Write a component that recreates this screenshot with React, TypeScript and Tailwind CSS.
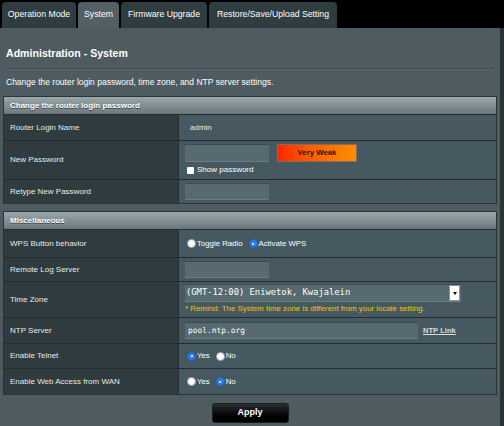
import React from 'react';

const sans = 'font-["Liberation_Sans",Arial,sans-serif]';
const mono = 'font-["DejaVu_Sans_Mono",monospace]';

function Radio({ checked }: { checked?: boolean }) {
  if (checked) {
    return (
      <span className="inline-flex items-center justify-center w-[9px] h-[9px] rounded-full bg-[#2d80ee] border border-[#1f63c4]">
        <span className="w-[2px] h-[2px] rounded-full bg-white" />
      </span>
    );
  }
  return <span className="inline-block w-[9px] h-[9px] rounded-full bg-white border border-[#9aa3a6]" />;
}

function Field({ className }: { className: string }) {
  return <div className={`bg-[#566a70] border-t border-t-[#3d4b50] border-b border-b-[#6b7d82] ${className}`} />;
}

function Row({ label, h, children }: { label: string; h: string; children?: React.ReactNode }) {
  return (
    <div className={`flex ${h} border-t border-[#232c2f]`}>
      <div className="w-[175px] shrink-0 bg-[#2f3b3f] border-r border-[#232c2f] flex items-center pl-[6px] text-[8px] text-[#e6eaeb]">
        {label}
      </div>
      <div className="flex-1 bg-[#475960] flex flex-col justify-center pl-[6px]">{children}</div>
    </div>
  );
}

function Head({ title }: { title: string }) {
  return (
    <div className="h-[17px] bg-gradient-to-b from-[#9aa7ab] to-[#6a777c] flex items-center pl-[6px] text-[8px] font-bold text-white [text-shadow:0_1px_0_#3a4448]">
      {title}
    </div>
  );
}

const tabs = [
  { name: 'Operation Mode', w: 'w-[74px]' },
  { name: 'System', w: 'w-[41px]', active: true },
  { name: 'Firmware Upgrade', w: 'w-[86px]' },
  { name: 'Restore/Save/Upload Setting', w: 'w-[128px]' },
];

export default function App() {
  return (
    <div className={`w-[504px] h-[426px] bg-black overflow-hidden ${sans}`}>
      <div className="flex items-end gap-[2px] pl-[2px] h-[28px]">
        {tabs.map((t) => (
          <div
            key={t.name}
            className={`${t.w} ${t.active ? 'h-[26px] bg-[#525f64]' : 'h-[26px] bg-[#2f3c40]'} rounded-t-[4px] flex items-center justify-center text-[8.7px] text-white`}
          >
            {t.name}
          </div>
        ))}
      </div>

      <div className="flex">
        <div className="w-[500px] h-[398px] bg-[#4e5b60] px-[3px]">
          <div className="pt-[17px] pl-[3px] h-[40px] text-[10.6px] font-bold text-white leading-[16px]">
            Administration - System
          </div>
          <div className="mx-[3px] border-t border-t-[#3e4a4e] border-b border-b-[#5a676c]" />
          <div className="pl-[3px] mt-[5px] h-[15px] leading-[15px] text-[8.5px] text-white">
            Change the router login password, time zone, and NTP server settings.
          </div>

          <div className="mt-[6px] border border-[#2a3336]">
            <Head title="Change the router login password" />
            <Row label="Router Login Name" h="h-[26px]">
              <span className="pl-[5px] text-[8px] text-[#e6eaeb]">admin</span>
            </Row>
            <Row label="New Password" h="h-[39px]">
              <div className="flex items-center gap-[8px]">
                <Field className="w-[84px] h-[18px]" />
                <div className="w-[80px] h-[18px] bg-gradient-to-r from-[#ff2300] to-[#ff8d00] border border-[#8a6a58] flex items-center justify-center text-[7.8px] font-bold text-[#2a1a10]">
                  Very Weak
                </div>
              </div>
              <div className="flex items-center gap-[3px] mt-[2px] pl-[2px] text-[8px] text-white">
                <span className="inline-block w-[7px] h-[7px] bg-white rounded-[1px]" />
                Show password
              </div>
            </Row>
            <Row label="Retype New Password" h="h-[24px]">
              <Field className="w-[84px] h-[17px]" />
            </Row>
          </div>

          <div className="mt-[7px] border border-[#2a3336]">
            <Head title="Miscellaneous" />
            <Row label="WPS Button behavior" h="h-[28px]">
              <div className="flex items-center gap-[1px] pl-[2px] text-[7.8px] text-white">
                <Radio />
                <span className="mr-[5px]">Toggle Radio</span>
                <Radio checked />
                <span>Activate WPS</span>
              </div>
            </Row>
            <Row label="Remote Log Server" h="h-[24px]">
              <Field className="w-[84px] h-[17px]" />
            </Row>
            <Row label="Time Zone" h="h-[36px]">
              <div className="w-[276px] h-[18px] bg-[#566a70] border-t border-t-[#3d4b50] border-b border-b-[#6b7d82] flex items-center justify-between">
                <span className={`pl-[1px] text-[8.8px] text-white ${mono}`}>(GMT-12:00) Eniwetok, Kwajalein</span>
                <span className="w-[11px] h-[16px] bg-white border border-[#8a9497] mr-[1px] flex items-center justify-center">
                  <span className="w-0 h-0 border-l-[2px] border-r-[2px] border-t-[3px] border-l-transparent border-r-transparent border-t-black" />
                </span>
              </div>
              <div className="mt-[1px] text-[7.9px] text-[#f1c400]">
                * Remind: The System time zone is different from your locale setting.
              </div>
            </Row>
            <Row label="NTP Server" h="h-[26px]">
              <div className="flex items-center gap-[5px]">
                <div className="w-[233px] h-[17px] bg-[#566a70] border-t border-t-[#3d4b50] border-b border-b-[#6b7d82] flex items-center">
                  <span className={`pl-[3px] text-[7.9px] text-white ${mono}`}>pool.ntp.org</span>
                </div>
                <span className="text-[7.6px] font-bold text-[#d7dcde] underline">NTP Link</span>
              </div>
            </Row>
            <Row label="Enable Telnet" h="h-[25px]">
              <div className="flex items-center gap-[1px] pl-[2px] text-[7.8px] text-white">
                <Radio checked />
                <span className="mr-[5px]">Yes</span>
                <Radio />
                <span>No</span>
              </div>
            </Row>
            <Row label="Enable Web Access from WAN" h="h-[26px]">
              <div className="flex items-center gap-[1px] pl-[2px] text-[7.8px] text-white">
                <Radio />
                <span className="mr-[5px]">Yes</span>
                <Radio checked />
                <span>No</span>
              </div>
            </Row>
          </div>

          <div className="flex justify-center mt-[8px]">
            <button className="w-[77px] h-[20px] rounded-[3px] bg-gradient-to-b from-[#2a2f31] to-[#000000] border border-[#1a1d1e] text-[9px] font-bold text-white">
              Apply
            </button>
          </div>
        </div>
        <div className="w-[4px] h-[398px] bg-[#2b3337]" />
      </div>
    </div>
  );
}
